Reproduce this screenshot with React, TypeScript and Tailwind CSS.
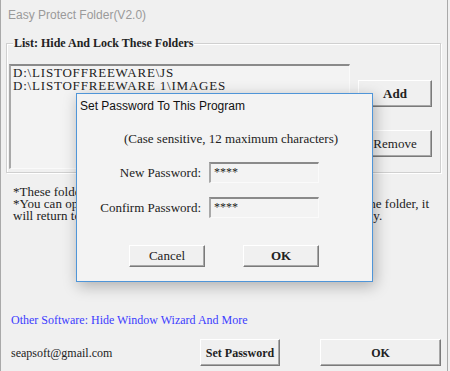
import React from 'react'

const serif = "font-['Liberation_Serif',serif]"
const sans = "font-['Liberation_Sans',Arial,sans-serif]"

// classic raised 3D button
function WinButton({ label, className = '', bold = false }: { label: string; className?: string; bold?: boolean }) {
  return (
    <button
      className={`flex items-center justify-center bg-[#f0f0f0] border border-t-[#ffffff] border-l-[#ffffff] border-r-[#7a7a7a] border-b-[#7a7a7a] shadow-[inset_-1px_-1px_0_#a8a8a8] text-[#222] ${bold ? 'font-bold' : ''} ${className}`}
    >
      {label}
    </button>
  )
}

function SunkenInput({ value, className = '' }: { value: string; className?: string }) {
  return (
    <div
      className={`bg-[#f3f3f3] border-t-2 border-l-2 border-t-[#8a8a8a] border-l-[#a8a8a8] border-r border-b border-r-[#fafafa] border-b-[#fafafa] px-[3px] text-[12px] leading-[16px] text-[#222] ${className}`}
    >
      {value}
    </div>
  )
}

export default function App() {
  const folders = ['D:\\LISTOFFREEWARE\\JS', 'D:\\LISTOFFREEWARE 1\\IMAGES']

  return (
    <div className={`relative w-[450px] h-[371px] overflow-hidden bg-[#f0f0f0] ${serif} text-[#222]`}>
      {/* main window frame */}
      <div className="w-[448px] h-[371px] border-r border-l border-[#a9a9a9] flex flex-col">
        <div className={`h-[30px] flex items-center pl-[7px] text-[12px] text-[#9a9a9a] ${sans}`}>
          Easy Protect Folder(V2.0)
        </div>

        {/* group box */}
        <div className="relative mt-[13px] ml-[5px] w-[435px] h-[130px] border border-[#d0d0d0] shadow-[inset_1px_1px_0_#ffffff,1px_1px_0_#ffffff]">
          <span className="absolute left-[6px] -top-[9px] px-[1px] bg-[#f0f0f0] text-[12px] font-bold leading-[16px]">
            List: Hide And Lock These Folders
          </span>
          <div className="flex gap-[8px] mt-[20px] ml-[2px]">
            <div className="w-[341px] h-[105px] bg-[#f3f3f3] border-t-2 border-l-2 border-t-[#8a8a8a] border-l-[#a8a8a8] border-r border-b border-r-[#fafafa] border-b-[#fafafa] pl-[2px]">
              {folders.map((f) => (
                <div key={f} className="text-[13px] tracking-[0.8px] leading-[12px] h-[12px] mt-[1px]">
                  {f}
                </div>
              ))}
            </div>
            <div className="flex flex-col gap-[23px] pt-[16px]">
              <WinButton label="Add" bold className="w-[74px] h-[27px] text-[13px]" />
              <WinButton label="Remove" className="w-[74px] h-[27px] text-[13px]" />
            </div>
          </div>
        </div>

        {/* notes */}
        <div className="mt-[13px] pl-[12px] text-[13px] leading-[12px] whitespace-nowrap">
          <div>*These folders are hidden and locked, nobody can see or open them.</div>
          <div>*You can open a protected folder here directly, and when you close the folder, it</div>
          <div>will return to a hidden and locked state once again, fully automatically.</div>
        </div>

        <div className="mt-[91px] pl-[10px] text-[12px] leading-[14px] text-[#3c3cff]">
          Other Software: Hide Window Wizard And More
        </div>

        <div className="flex items-center mt-[12px]">
          <div className="pl-[10px] w-[199px] text-[12px]">seapsoft@gmail.com</div>
          <WinButton label="Set Password" bold className="w-[80px] h-[27px] text-[12px]" />
          <WinButton label="OK" bold className="ml-[40px] w-[121px] h-[27px] text-[12px]" />
        </div>
      </div>

      {/* modal dialog */}
      <div className="absolute left-[76px] top-[93px] w-[297px] h-[189px] bg-[#f3f3f3] border border-[#4f95d8] shadow-[2px_4px_14px_rgba(0,0,0,0.28)] flex flex-col">
        <div className={`h-[22px] flex items-center pl-[3px] pt-[1px] text-[12px] text-[#111] ${sans}`}>
          Set Password To This Program
        </div>
        <div className="mt-[15px] pl-[47px] text-[13px] leading-[16px] whitespace-nowrap">
          (Case sensitive, 12 maximum characters)
        </div>
        <div className="flex items-center mt-[15px]">
          <div className="w-[124px] text-right text-[13px]">New Password:</div>
          <SunkenInput value="****" className="ml-[8px] w-[110px] h-[21px]" />
        </div>
        <div className="flex items-center mt-[14px]">
          <div className="w-[124px] text-right text-[13px]">Confirm Password:</div>
          <SunkenInput value="****" className="ml-[8px] w-[110px] h-[21px]" />
        </div>
        <div className="flex mt-[27px] pl-[52px] gap-[38px]">
          <WinButton label="Cancel" className="w-[76px] h-[22px] text-[13px]" />
          <WinButton label="OK" bold className="w-[76px] h-[22px] text-[13px]" />
        </div>
      </div>
    </div>
  )
}
